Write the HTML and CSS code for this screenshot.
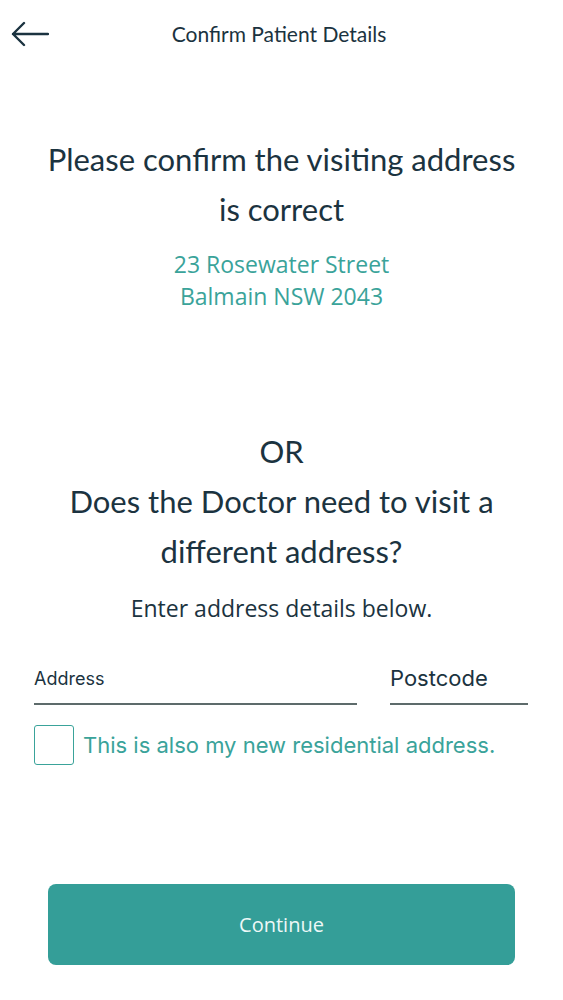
FILE: index.html
```html
<!DOCTYPE html>
<html lang="en">
<head>
  <meta charset="UTF-8">
  <meta name="viewport" content="width=device-width, initial-scale=1.0">
  <title>Confirm Patient Details</title>
  <link rel="stylesheet" href="styles.css">
</head>
<body>
  <div class="screen">
    <header class="topbar">
      <button class="back" aria-label="Back">
        <svg width="38" height="26" viewBox="0 0 38 26">
          <path d="M37 13H2M13 2L2 13l11 11" fill="none" stroke="#1b3340" stroke-width="2.4" stroke-linecap="round" stroke-linejoin="round"/>
        </svg>
      </button>
      <h1 class="title">Confirm Patient Details</h1>
      <span></span>
    </header>

    <section class="confirm">
      <h2 class="question">Please confirm the visiting address<br>is correct</h2>
      <p class="current-address">23 Rosewater Street<br>Balmain NSW 2043</p>
    </section>

    <section class="different">
      <h2 class="question">OR<br>Does the Doctor need to visit a<br>different address?</h2>
      <p class="hint">Enter address details below.</p>
    </section>

    <form class="address-form">
      <div class="fields">
        <label class="field field-address">
          <input type="text" placeholder="Address">
        </label>
        <label class="field field-postcode">
          <input type="text" placeholder="Postcode">
        </label>
      </div>
      <label class="check">
        <input type="checkbox">
        <span class="box"></span>
        <span class="check-text">This is also my new residential address.</span>
      </label>
      <button type="button" class="continue">Continue</button>
    </form>
  </div>
</body>
</html>
```

FILE: styles.css
```css
body {
  margin: 0;
  background: #fff;
  font-family: "Open Sans", sans-serif;
  color: #1b3340;
}

.screen {
  width: 563px;
  height: 1000px;
}

.topbar {
  display: grid;
  grid-template-columns: 60px 1fr 60px;
  align-items: center;
  height: 68px;
}

.back {
  border: none;
  background: none;
  padding: 0 0 0 11px;
  height: 26px;
  cursor: pointer;
}

.back svg {
  display: block;
}

.title {
  margin: 0;
  text-align: center;
  font-family: Lato, sans-serif;
  font-weight: 400;
  font-size: 21px;
  padding-right: 5px;
  position: relative;
  top: -1px;
}

.question {
  margin: 0;
  text-align: center;
  font-family: Lato, sans-serif;
  font-weight: 400;
  font-size: 31px;
  line-height: 50px;
}

.confirm {
  padding-top: 66px;
}

.current-address {
  margin: 14px 0 0;
  text-align: center;
  color: #3aa39a;
  font-size: 23px;
  line-height: 32px;
}

.different {
  padding-top: 114px;
}

.hint {
  margin: 16px 0 0;
  text-align: center;
  font-size: 23px;
  line-height: 32px;
}

.address-form {
  padding: 0 34px;
}

.fields {
  display: flex;
  align-items: flex-end;
  gap: 33px;
  margin-top: 40px;
}

.field {
  display: block;
  border-bottom: 2px solid #5d6b6b;
}

.field-address {
  width: 323px;
}

.field-postcode {
  width: 138px;
}

.field input {
  width: 100%;
  border: none;
  outline: none;
  padding: 0;
  background: none;
  font-family: Inter, sans-serif;
  color: #1b3340;
}

.field-address input {
  font-size: 18px;
  height: 24px;
  margin-bottom: 13px;
}

.field-postcode input {
  font-size: 22px;
  height: 28px;
  margin-bottom: 11px;
}

.field input::placeholder {
  color: #1b3340;
  opacity: 1;
}

.check {
  display: flex;
  align-items: center;
  gap: 9px;
  margin-top: 20px;
  cursor: pointer;
}

.check input {
  display: none;
}

.box {
  width: 38px;
  height: 38px;
  border: 1.5px solid #3aa39a;
  border-radius: 3px;
}

.check-text {
  font-family: Inter, sans-serif;
  color: #3aa39a;
  font-size: 22px;
}

.continue {
  display: block;
  width: 467px;
  height: 81px;
  margin: 119px 0 0 14px;
  border: none;
  border-radius: 8px;
  background: #349e98;
  color: #eef8f7;
  font-family: "Open Sans", sans-serif;
  font-size: 20px;
  cursor: pointer;
}
```
